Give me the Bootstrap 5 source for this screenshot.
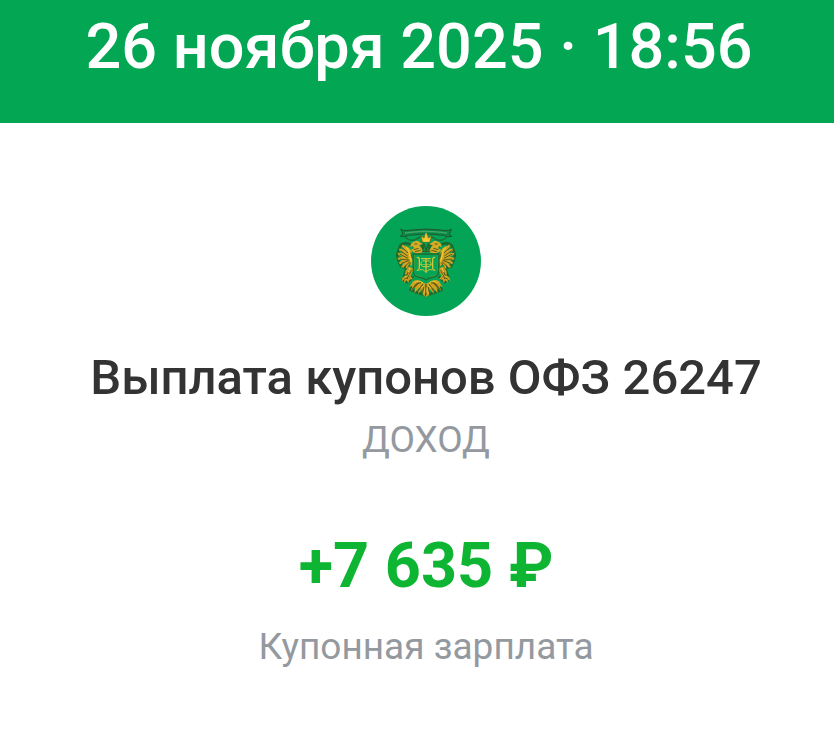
<!DOCTYPE html>
<html lang="ru">
<head>
  <meta charset="UTF-8" />
  <meta name="viewport" content="width=device-width, initial-scale=1.0" />
  <title>Выплата купонов ОФЗ 26247</title>
  <link rel="stylesheet" href="https://cdn.jsdelivr.net/npm/bootstrap@5.3.0/dist/css/bootstrap.min.css">
  <style>
    body {
      font-family: Roboto, "Liberation Sans", sans-serif;
      background: #fff;
    }
    .op-header {
      background: #02a653;
      padding: 9px 0 38px 4px;
    }
    .op-date, .op-amount {
      font-size: 63px;
      line-height: 76px;
    }
    .op-date {
      font-weight: 500;
    }
    .op-body {
      padding: 83px 0 32px 18px;
    }
    .op-logo {
      width: 110px;
      height: 110px;
      margin-bottom: 32px;
    }
    .op-title {
      font-size: 49px;
      line-height: 60px;
      font-weight: 500;
      color: #333;
      margin-bottom: 10px;
    }
    .op-note {
      font-size: 37px;
      line-height: 44px;
      color: #9499a0;
    }
    .op-amount {
      font-weight: 700;
      color: #0db533;
      margin: 66px 0 21px;
    }
  </style>
</head>
<body>
  <header class="op-header text-center text-white">
    <h1 class="op-date mb-0 text-white">26 ноября 2025 · 18:56</h1>
  </header>

  <main class="op-body d-flex flex-column align-items-center text-center">
    <svg class="op-logo" viewBox="15 18 330 330" role="img" aria-label="Минфин России">
      <circle cx="180" cy="183" r="165" fill="#04a456" />
      <!-- half of the eagle, mirrored below -->
      <defs>
        <g id="eagleHalf">
          <g fill="none" stroke="#1f6a30" stroke-width="9" stroke-linejoin="round" stroke-linecap="round">
            <path d="M141 137Q116 122 103 137L97 154L94 166L98 182L105 198L120 204M124 202L118 220L112 239L124 246L139 232M142 252L134 269L150 276L165 281L179 285" />
            <path d="M147 145L153 130L171 134L169 149" />
          </g>
          <!-- wing -->
          <path d="M137 154Q128 138 114 137Q109 128 107 141L116 151L101 145L99 151L112 160L95 158L97 165L111 169L94 174L98 180L112 178L98 188L103 193L116 186L105 201L112 203L121 193L119 206L126 203L130 191L137 199L140 184L136 169Z" fill="#d0a51f" />
          <g fill="none" stroke="#5d5a1c" stroke-width="3">
            <path d="M108 142L126 159M103 152L125 168M101 162L126 175M101 177L128 180M106 190L130 181M116 200L132 185M125 202L134 188M134 158L140 176" />
          </g>
          <path d="M120 143Q131 148 131 168L136 184" fill="none" stroke="#efc83a" stroke-width="4" />
          <!-- head and neck -->
          <path d="M133 138Q135 127 147 124Q155 120 161 127L171 132L160 136Q168 146 172 156L154 161L143 157L134 150L144 145L140 138L133 142Z" fill="#d6ab26" />
          <path d="M145 132L154 132M143 149L158 145M147 155L164 151" stroke="#5d5a1c" stroke-width="3" />
          <!-- leg with claws -->
          <path d="M128 200L119 212L117 224L125 222L109 233L107 244L115 238L114 249L122 241L127 249L130 239L141 237L133 228L139 216L146 222L140 204Z" fill="#c79e20" />
          <path d="M130 208L124 222L130 232M121 225L125 237M136 211L130 224M115 237L125 232" fill="none" stroke="#595b1c" stroke-width="3" />
          <path d="M132 204L127 216M117 231L124 228" stroke="#f0cf48" stroke-width="3" />
          <!-- tail -->
          <path d="M173 248Q156 234 141 244L130 261L139 258L135 272L148 261L145 279L160 263L156 282L169 266L171 285L180 291V251Z" fill="#cfa41f" />
          <path d="M165 248Q151 248 144 262M171 253L157 272M174 261L169 277M157 249L139 267M180 253V285" fill="none" stroke="#625a1b" stroke-width="4" />
          <path d="M171 249Q157 239 146 248M174 256L164 264M177 262V278" fill="none" stroke="#ebc638" stroke-width="3" />
          <!-- shield edge -->
          <path d="M180 162H142V216Q143 230 160 232Q174 234 180 240Z" fill="#04a456" />
          <path d="M180 162H142V216Q143 230 160 232Q174 234 180 240" fill="none" stroke="#1f6a30" stroke-width="4" />
          <path d="M145 165V213M148 223Q158 230 169 230" fill="none" stroke="#5f9a2e" stroke-width="2" />
        </g>
      </defs>
      <use href="#eagleHalf" />
      <use href="#eagleHalf" transform="translate(360 0) scale(-1 1)" />
      <!-- ribbon -->
      <path d="M104 87Q112 94 126 91Q180 83 234 91Q248 94 256 87L250 103L257 109Q243 113 233 106Q180 97 127 106Q116 114 103 108L111 102Z" fill="#078a4a" stroke="#20562d" stroke-width="3" stroke-linejoin="round" />
      <path d="M118 99Q180 90 242 99" fill="none" stroke="#6bb572" stroke-width="4" stroke-dasharray="4 2" />
      <path d="M119 111Q128 125 149 119L165 109M241 111Q232 125 211 119L195 109" fill="none" stroke="#216a33" stroke-width="4" />
      <!-- crown -->
      <path d="M165 107L174 114L177 103H184L187 114L196 107L192 126H169Z" fill="#f1c52c" stroke="#665d1d" stroke-width="2" />
      <path d="M172 123H189M180 99V106" stroke="#ffe14d" stroke-width="3" />
      <path d="M174 131L180 151L187 131M168 154H193" fill="none" stroke="#315f25" stroke-width="4" />
      <!-- monogram -->
      <g fill="none" stroke="#3d8a2b" stroke-width="6">
        <path d="M159 173V209M201 173V209M180 176V216" />
      </g>
      <g fill="none" stroke="#cfc83c" stroke-width="4" stroke-linecap="round">
        <path d="M154 172Q161 172 160 182V204Q160 210 154 211M206 172Q199 172 200 182V204Q200 210 206 211" />
        <path d="M167 176H193M180 176V216" />
        <path d="M160 194H200" stroke-width="2" />
        <path d="M180 184Q166 178 165 191Q165 203 180 200M180 184Q194 178 195 191Q195 203 180 200" stroke-width="3" />
        <path d="M162 210Q170 204 180 217Q190 204 198 210" stroke-width="3" />
      </g>
    </svg>
    <h2 class="op-title">Выплата купонов ОФЗ 26247</h2>
    <div class="op-note">ДОХОД</div>
    <div class="op-amount">+7 635 ₽</div>
    <div class="op-note">Купонная зарплата</div>
  </main>

  <script src="https://cdn.jsdelivr.net/npm/bootstrap@5.3.0/dist/js/bootstrap.bundle.min.js"></script>
</body>
</html>
